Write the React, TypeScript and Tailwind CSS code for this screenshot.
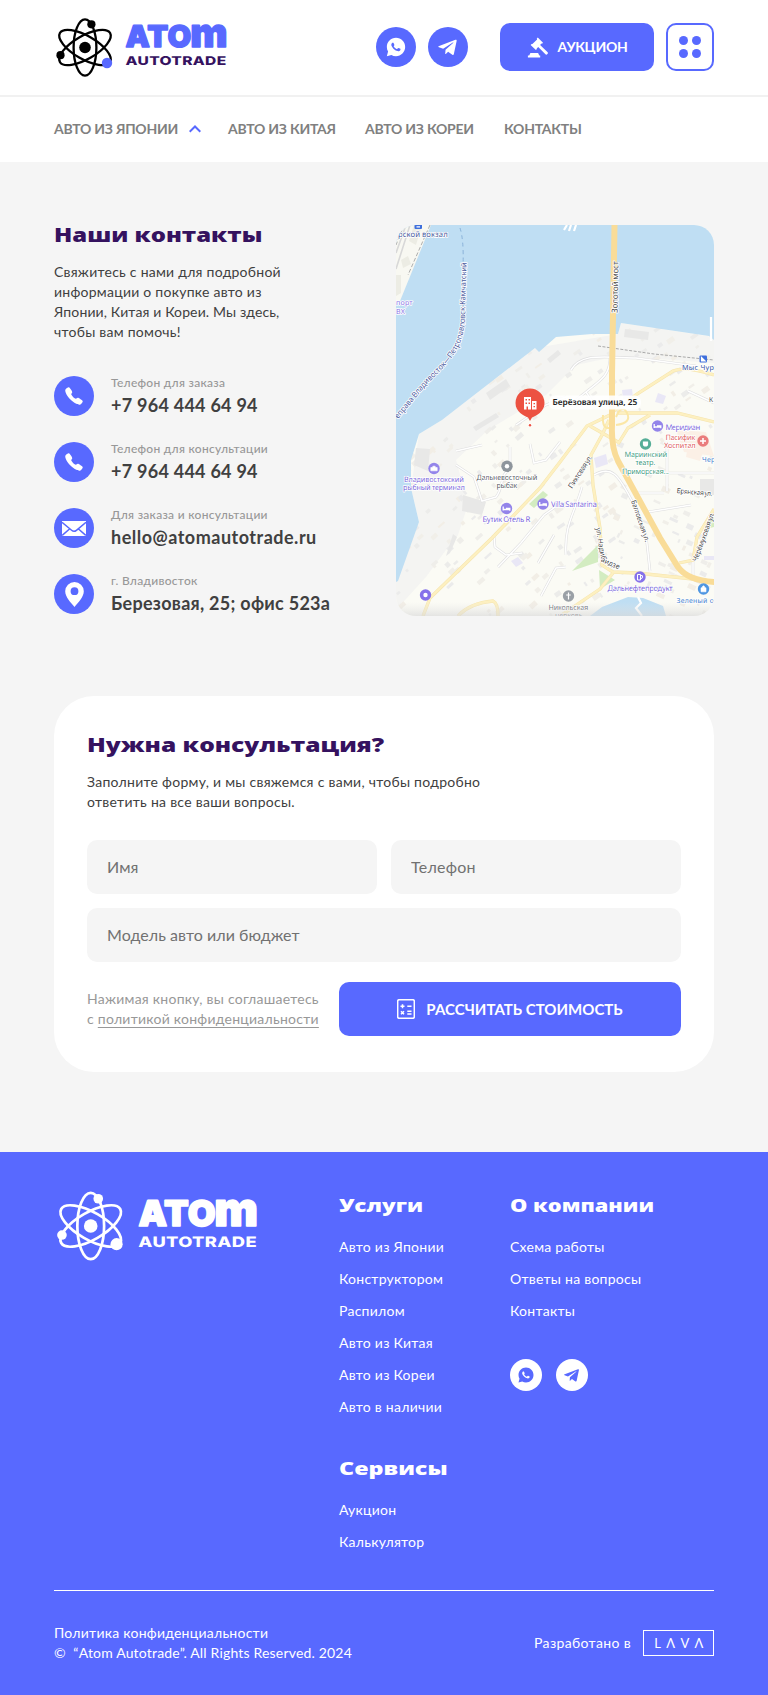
import type { ReactNode } from "react";
import { RiWhatsappFill } from "react-icons/ri";
import { FaTelegramPlane } from "react-icons/fa";
import { IoCall } from "react-icons/io5";

function Logo({ className, atom, accent, name, sub }: { className: string; atom: string; accent: string; name: string; sub: string }) {
  return (
    <svg className={className} viewBox="54 16 174 63" role="img" aria-label="Atom Autotrade">
      <g fill="none" stroke={atom} strokeWidth="2.3">
        <ellipse cx="85" cy="47.5" rx="11.4" ry="28.2" />
        <ellipse cx="85" cy="47.5" rx="11.6" ry="29" transform="rotate(60 85 47.5)" />
        <ellipse cx="85" cy="47.5" rx="11.6" ry="29" transform="rotate(-60 85 47.5)" />
      </g>
      <circle cx="85" cy="47.5" r="5.8" fill={atom} />
      <circle cx="91.4" cy="24.3" r="4.1" fill={atom} />
      <circle cx="60.5" cy="55.2" r="4.1" fill={atom} />
      <circle cx="107" cy="63" r="5.2" fill={accent} />
      <g fill={name} stroke={name} strokeWidth="1.4" strokeLinejoin="round" textRendering="geometricPrecision" className="font-['Inter'] font-black">
        <text x="125.6" y="47.3" fontSize="30" textLength="66" lengthAdjust="spacingAndGlyphs">ATO</text>
        <text x="190.2" y="47.3" fontSize="40" textLength="37.500" lengthAdjust="spacingAndGlyphs">m</text>
      </g>
      <text x="125.5" y="65" fontSize="12.2" textLength="101" lengthAdjust="spacingAndGlyphs" textRendering="geometricPrecision" fill={sub} className="font-['Inter'] font-extrabold">AUTOTRADE</text>
    </svg>
  );
}

function Heading({ children, className }: { children: ReactNode; className: string }) {
  return <h2 className={`origin-left whitespace-nowrap font-['Open_Sans'] font-extrabold leading-5 ${className}`}>{children}</h2>;
}

const GavelIcon = () => (
  <svg className="size-[21px]" viewBox="0 0 21 21" fill="currentColor">
    <path d="M10.800.6l5.200 5.200-1 1-.6-.2-1.300 1.300 7.300 7a1.500 1.500 0 0 1-2.200 2.200l-7-7.200-1.500 1.500.2.700-1 1L3.600 7.900l1-1 .8.2 4.700-4.700-.3-.8zM3.400 16h7.700l1.200 2.600h.9V20.500H.9V18.600h1.300z" />
  </svg>
);

const MailIcon = () => (
  <svg className="h-[15px] w-6" viewBox="0 0 24 15">
    <rect width="24" height="15" fill="#fff" />
    <path d="M0 1.2 9.6 9.3Q12 11.3 14.4 9.3L24 1.2M.2 14.4l7.6-6.6M23.8 14.4l-7.6-6.6" fill="none" stroke="#5869ff" strokeWidth="1.5" />
  </svg>
);

const PinIcon = () => (
  <svg className="h-[25px] w-[19px]" viewBox="0 0 19 25">
    <path fillRule="evenodd" fill="#fff" d="M9.5 0A9.3 9.3 0 0 0 .2 9.3C.2 15 6 21 9.5 25 13 21 18.800 15 18.800 9.300A9.300 9.300 0 0 0 9.500 0Zm0 5.300a3.900 3.900 0 1 1 0 7.800 3.900 3.900 0 0 1 0-7.800Z" />
  </svg>
);

const CalcIcon = () => (
  <svg className="h-5 w-[18px]" viewBox="0 0 18 20" fill="none" stroke="#fff" strokeWidth="1.5">
    <rect x=".7" y=".7" width="16.600" height="18.600" rx="1.500" />
    <path d="M3.500 7.200h4M5.500 5.200v4M10.300 7.200h4.200M10.300 12.300h4.200M10.300 15h4.200M4 12.200l3 3M7 12.200l-3 3" />
  </svg>
);

const contacts = [
  { label: "Телефон для заказа", value: "+7 964 444 64 94", icon: <IoCall className="size-[20px]" />, tracking: "tracking-[0.25px]" },
  { label: "Телефон для консультации", value: "+7 964 444 64 94", icon: <IoCall className="size-[20px]" />, tracking: "tracking-[0.25px]" },
  { label: "Для заказа и консультации", value: "hello@atomautotrade.ru", icon: <MailIcon />, tracking: "tracking-[0.5px]" },
  { label: "г. Владивосток", value: "Березовая, 25; офис 523а", icon: <PinIcon />, tracking: "tracking-[0.27px]" },
];

let seed = 7;
const rnd = () => (seed = (seed * 16807) % 2147483647) / 2147483647;
const blocks = Array.from({ length: 330 }, () => {
  const x = rnd() * 318, y = 105 + rnd() * 286, w = 2 + rnd() * 7, h = 2 + rnd() * 3.5, a = x < 150 && y > 200 ? -42 : x > 215 && y > 215 ? 25 : -35;
  return { x, y, w, h, a, c: ["#ececea", "#efeeea", "#f1efe9", "#ebebeb", "#f2eee6"][Math.floor(rnd() * 5)] };
});

const smallRoads = [
  "M175 145C185 128 205 132 240 133L300 141", "M214 133C214 150 205 155 190 167L176 178", "M190 167L200 182",
  "M60 226L86 220M60 240L78 252 86 276 100 272C108 262 104 250 112 246", "M114 222V245M134 219L138 238 150 235 164 217",
  "M98 312L99 322 110 330 126 328M102 342L125 318 148 290 162 280", "M142 338L158 310M145 371L160 343 170 342",
  "M198 250C215 240 222 248 238 280L250 310 254 346", "M252 287L295 280M271 266V220M240 268H268M273 248H318M297 353V335",
  "M170 330C168 300 178 290 186 262", "M292 166L318 178", "M120 200L150 180 170 172",
];
const yellowRoads = [
  "M27 391L34 373 96 313 144 263 164 237 191 201 214 190", "M62 391Q74 378 97 376 102 378 102 391",
  "M218 186L241 169 277 146Q290 141 318 150", "M213 195L206 210 195 230 197 260 204 303 206 340 217 347 241 348 297 354",
  "M164 391L204 364 217 348", "M221 188H281L318 197M194 201L222 217M222 219L232 203 254 190M283 338L297 335 301 312 318 284",
];

const halo = { paintOrder: "stroke" as const, stroke: "#fff", strokeWidth: 1.6, strokeLinejoin: "round" as const };

function Poi({ x, y, color, kind }: { x: number; y: number; color: string; kind: string }) {
  return (
    <g transform={`translate(${x} ${y})`}>
      <circle r="5.700" fill={color} />
      {kind === "dot" && <circle r="2.200" fill="#fff" />}
      {kind === "bed" && <path d="M-3.300-2v4M-3.300 1H3.300v1.200M-.5 0h3.800v1" stroke="#fff" strokeWidth="1.300" fill="none" />}
      {kind === "case" && <path d="M-3.200-1h6.400v3.300h-6.400zM-1.200-1v-1.300h2.400V-1" fill="#fff" stroke="#fff" strokeWidth=".6" />}
      {kind === "plus" && <path d="M0-3v6M-3 0h6" stroke="#fff" strokeWidth="1.500" />}
      {kind === "cross" && <path d="M0-3.500v7M-2.300-1h4.600" stroke="#fff" strokeWidth="1.200" />}
      {kind === "mask" && <path d="M-2.600-2.500h5.200V0A2.600 2.600 0 0 1-2.600 0z" fill="#fff" />}
      {kind === "fuel" && <path d="M-2.500 3v-5.500h3V3zM1-1.500Q3-2 2.500 0T1 1.500" fill="none" stroke="#fff" strokeWidth="1" />}
      {kind === "bag" && <path d="M-2.500-1.200h5v4h-5zM-1.200-1.200q0-2 1.200-2t1.200 2" fill="#fff" stroke="#fff" strokeWidth=".6" />}
    </g>
  );
}

function ContactMap() {
  return (
    <svg className="h-[391px] w-[318px] shrink-0 rounded-[20px] bg-[#fbfbf5] font-['Noto_Sans']" viewBox="0 0 318 391" textRendering="geometricPrecision">
      <defs>
        <path id="ferry" d="M2 194L32 158Q58 134 64 118T69 84L71 30" />
        <path id="nadibaidze" d="M200 303Q203 326 206 337L226 346" />
        <linearGradient id="shade" x1="0" y1="0" x2="0" y2="1">
          <stop offset="0" stopColor="#e5e5e5" stopOpacity="0" />
          <stop offset="1" stopColor="#d8d8d8" stopOpacity=".65" />
        </linearGradient>
      </defs>
      <path d="M46 195L139 123 222 109 225 98 318 112V138L222 131 180 140 150 170 92 205 60 235 72 280 62 310 50 325 30 352 0 385V356L23 297 15 263 23 209Z" fill="#f4f4f2" />
      {blocks.map((b, i) => (
        <rect key={i} x={b.x} y={b.y} width={b.w} height={b.h} fill={b.c} transform={`rotate(${b.a} ${b.x} ${b.y})`} />
      ))}
      <g fill="#e8e8e7">
        <path d="M90 168L110 154 114 161 94 175ZM20 223L34 224 32 246 18 240ZM50 331L57 309 61 312 54 328ZM67 270L90 277 86 290 66 286ZM229 104L253 107 252 115 228 112ZM77 202L100 188 103 192 80 206Z" />
        <path d="M304 254h14v16h-14zM151 134L162 125 165 129 154 138Z" />
      </g>
      <path d="M202 320L176 346 202 337ZM203 345L219 355 204 364ZM309 296l9-4v10l-9 2zM133 279l14-13 5 4-14 13z" fill="#d3ecc1" />
      <path d="M226 165l10-1 1 9-10 1zM262 168l8 3-3 8-8-2zM198 233l12-4 2 10-12 4zM115 336l7-4 5 6-7 4zM308 331h10v4h-10z" fill="#e9e7f6" />
      <path d="M280 205l30 2 8 24-30-4zM292 220l16 4-4 12-14-4z" fill="#fbf0e6" />
      <g fill="none" stroke="#dededf" strokeWidth="2.600">{smallRoads.map(d => <path key={d} d={d} />)}</g>
      <g fill="none" stroke="#fff" strokeWidth="1.500">{smallRoads.map(d => <path key={d} d={d} />)}</g>
      <path fill="#bfdef3" d="M0 0H318V115L313 111 225 98 222 109 196 109 160 112 143 127 139 123 46 195 23 209 15 235 15 263 23 297 2 356 0 357Z" />
      <path fill="#bfdef3" d="M194 391L206 382 232 372 247 373 267 381 270 391Z" />
      <path d="M315 92V116M171 0L168 5M175 0L173 6M180 0L178 6M242 372L245 378 240 383 246 391" stroke="#fff" strokeWidth="2.200" fill="none" />
      <path d="M0 0H35L4 76 0 78Z" fill="#f8f8f2" />
      <path d="M18 0L26 0 20 20 13 16ZM5 35l7-4 3 8-8 4ZM0 50l5 0 0 18-5 3Z" fill="#ececE4" />
      <path d="M10 0L0 28M14 0L0 44" stroke="#d8d8d8" strokeWidth="1.600" />
      <path d="M34 0L12 50M8 0L0 20" stroke="#9a9a9a" strokeWidth=".8" strokeDasharray="4 2" />
      <path d="M64 3Q68 15 67 42" stroke="#84aed6" strokeWidth=".9" strokeDasharray="4 3.500" fill="none" />
      <path d="M202 121L258 129 318 135" stroke="#aaa" strokeWidth="1" strokeDasharray="3 1.500" fill="none" />
      <g fill="none" stroke="#f5e4ae" strokeWidth="3.300">{yellowRoads.map(d => <path key={d} d={d} />)}</g>
      <g fill="none" stroke="#fdf0c0" strokeWidth="2.300">{yellowRoads.map(d => <path key={d} d={d} />)}</g>
      <path d="M207 190Q206 204 213 203T216 195M220 200Q236 198 231 188T220 192" fill="none" stroke="#fbe7a6" strokeWidth="2" />
      <path d="M218.500 0L216 150V200Q215 222 222 236L264 313 282 342Q292 356 320 357" fill="none" stroke="#f9dc98" strokeWidth="6" />

      <g fontSize="7.800" fill="#4a5a9e" style={halo}>
        <text><textPath href="#ferry" textLength="180">еправа Владивосток—Петропавловск-Камчатский</textPath></text>
        <text x="2" y="12" textLength="50">рской вокзал</text>
        <text x="286" y="145" fontSize="7.200" fill="#3555a5">Мыс Чурк</text>
      </g>
      <g fontSize="8" fill="#8a72e6" style={halo}>
        <text x="0" y="80" fontSize="7">порт</text><text x="0" y="88.500" fontSize="7">ВХ</text>
      </g>
      <g fontSize="7.800" fill="#7b68dc" style={halo}>
        <text x="8" y="257" fontSize="7.400" textLength="60">Владивостокский</text>
        <text x="7" y="265.300" fontSize="7.400" textLength="62">рыбный терминал</text>
        <text x="86.500" y="297" textLength="48">Бутик Отель R</text>
        <text x="155" y="282" textLength="46">Villa Santarina</text>
        <text x="269.500" y="204.500" textLength="35">Меридиан</text>
        <text x="211.500" y="366" textLength="65.500">Дальнефтепродукт</text>
      </g>
      <g fontSize="7.400" fill="#5d6168" style={halo}>
        <text x="80.500" y="255" textLength="61">Дальневосточный</text>
        <text x="100.500" y="263.300" textLength="21">рыбак</text>
        <text x="152.500" y="384.500" textLength="40">Никольская</text>
        <text x="159" y="392.500" textLength="28">церковь</text>
      </g>
      <g fontSize="7.500" fill="#3f9c82" style={halo}>
        <text x="228.500" y="232" textLength="43">Мариинский</text>
        <text x="239.500" y="240.300" textLength="20">театр.</text>
        <text x="226" y="248.600" textLength="47">Приморская...</text>
      </g>
      <g fontSize="7.500" fill="#e0605f" style={halo}>
        <text x="269.500" y="214.500" textLength="30">Пасифик</text>
        <text x="268" y="223" textLength="32">Хоспитал</text>
      </g>
      <g fontSize="7.200" fill="#3f7fd0" style={halo}>
        <text x="306" y="236.500" fontSize="7">Чер</text>
        <text x="280.500" y="377.500" fontSize="6.900">Зеленый ос</text>
      </g>
      <g fontSize="7.400" fill="#4b4b4b" style={halo}>
        <text transform="translate(221.500 88) rotate(-89)" fontSize="8.200" textLength="52">Золотой мост</text>
        <text transform="translate(176 264) rotate(-57)" textLength="38">Пихтовая ул.</text>
        <text transform="translate(235 276) rotate(71)" fontSize="7" textLength="44">Балтовская ул.</text>
        <text transform="translate(280.500 268) rotate(5)" fontSize="7" textLength="36">Брянская ул.</text>
        <text transform="translate(301 337) rotate(-70)" fontSize="7.200" textLength="52">Черёмуховая ул.</text>
        <text fontSize="7.200"><textPath href="#nadibaidze" textLength="53">ул. Надибаидзе</textPath></text>
        <text x="313" y="177" fontSize="6.500">К</text>
      </g>

      <Poi x={38} y={243.500} color="#9384ea" kind="case" />
      <Poi x={111} y={241.300} color="#8e959c" kind="dot" />
      <Poi x={110.500} y={283.500} color="#9384ea" kind="bed" />
      <Poi x={147} y={279} color="#9384ea" kind="bed" />
      <Poi x={29.500} y={370} color="#8672ea" kind="dot" />
      <Poi x={261.500} y={201} color="#9384ea" kind="bed" />
      <Poi x={249.500} y={219} color="#55ae97" kind="mask" />
      <Poi x={307} y={216} color="#ea7c7c" kind="plus" />
      <Poi x={244} y={352} color="#8672ea" kind="fuel" />
      <Poi x={172.500} y={371} color="#9aa0a6" kind="cross" />
      <Poi x={307.500} y={364} color="#4e96e2" kind="bag" />
      <g fill="#3e6fdc">
        <rect x="18.500" y="-3" width="7.500" height="7" rx="1" /><rect x="303.500" y="130.500" width="7.500" height="7" rx="1" />
      </g>
      <path d="M20.500 1.800h3.500M305.500 136v-3.500l3.500 3.500z" stroke="#fff" strokeWidth="1.200" fill="#fff" />

      <path d="M119.500 178a14.500 14.500 0 1 1 29 0C148.500 187 140 190.500 136 192.500L134 196 132 192.500C128 190.500 119.500 187 119.500 178Z" fill="#ec5242" />
      <circle cx="134" cy="200.300" r="2" fill="#fff" /><circle cx="134" cy="200.300" r="1.200" fill="#ec5242" />
      <path fillRule="evenodd" fill="#fff" d="M128 172h7v12.500h-7zM129.500 174v1.500h1.500V174zm3 0v1.500h1.500V174zm-3 3.500v1.500h1.500v-1.500zm3 0v1.500h1.500v-1.500zm-2 4v3h1.500v-3zM136 176h4.500v8.500H136zm1.500 2v1.300h1.500V178zm0 3v1.300h1.500V181z" />
      <rect x="153" y="170.500" width="92" height="14" rx="6" fill="#fff" fillOpacity=".9" />
      <text x="156.500" y="180.300" fontSize="8.300" textLength="85" className="font-semibold" fill="#1c1c1c">Берёзовая улица, 25</text>
      <rect y="377" width="318" height="14" fill="url(#shade)" />
    </svg>
  );
}

function FooterLinks({ items }: { items: string[] }) {
  return (
    <ul className="mt-[22px] flex flex-col gap-3 whitespace-nowrap">
      {items.map(i => <li key={i}><a href="#">{i}</a></li>)}
    </ul>
  );
}

export default function App() {
  return (
    <div className="w-[768px] bg-[#f5f5f5] font-['Lato',sans-serif] text-sm leading-5 tracking-[0.25px] text-[#404040]">
      <header className="bg-white">
        <div className="flex h-[95px] items-center px-[54px]">
          <Logo className="h-[63px] w-[174px]" atom="#000" accent="#5869ff" name="#5869ff" sub="#35125f" />
          <div className="mb-px ml-auto flex items-center text-white">
            <a href="#" className="flex size-10 items-center justify-center rounded-full bg-[#5869ff]"><RiWhatsappFill className="size-[22px]" /></a>
            <a href="#" className="ml-3 flex size-10 items-center justify-center rounded-full bg-[#5869ff]"><FaTelegramPlane className="mr-px size-[21px]" /></a>
            <button className="ml-8 flex h-12 w-[154px] items-center justify-center gap-2.5 rounded-[10px] bg-[#5869ff] text-sm font-bold tracking-[-0.3px]">
              <GavelIcon />АУКЦИОН
            </button>
            <button aria-label="Меню" className="ml-3 flex size-12 items-center justify-center rounded-[10px] border-2 border-[#5869ff]">
              <span className="grid grid-cols-2 gap-1">
                {[0, 1, 2, 3].map(i => <i key={i} className="size-[9px] rounded-full bg-[#5869ff]" />)}
              </span>
            </button>
          </div>
        </div>
        <nav className="flex h-[67px] items-center border-t-2 border-[#f1f1f1] px-[54px] pb-0.5 font-bold tracking-[-0.25px] text-[#808080]">
          <a href="#" className="w-[125px] whitespace-nowrap">АВТО ИЗ ЯПОНИИ</a>
          <svg className="ml-2.5 h-2 w-3" viewBox="0 0 12 8" fill="none" stroke="#5869ff" strokeWidth="2"><path d="M.7 6.700 6 1.500l5.300 5.200" /></svg>
          <a href="#" className="ml-[27px] w-[137px] whitespace-nowrap">АВТО ИЗ КИТАЯ</a>
          <a href="#" className="w-[139px] whitespace-nowrap">АВТО ИЗ КОРЕИ</a>
          <a href="#">КОНТАКТЫ</a>
        </nav>
      </header>

      <main className="px-[54px] pb-20 pt-[63px]">
        <section className="flex justify-between">
          <div>
            <Heading className="w-fit scale-x-[1.195] text-xl tracking-normal text-[#35125f]">Наши контакты</Heading>
            <p className="mt-[17px] whitespace-nowrap">Свяжитесь с нами для подробной<br />информации о покупке авто из<br /><span className="tracking-[0.12px]">Японии, Китая и Кореи. Мы здесь,</span><br />чтобы вам помочь!</p>
            <ul className="mt-[34px] flex flex-col gap-[26px]">
              {contacts.map(c => (
                <li key={c.label} className="flex h-10 gap-[17px]">
                  <span className="flex size-10 shrink-0 items-center justify-center rounded-full bg-[#5869ff] text-white">{c.icon}</span>
                  <div className="-mt-px flex flex-col gap-[3px] whitespace-nowrap">
                    <span className="text-xs font-medium tracking-[0.28px] text-[#989898]">{c.label}</span>
                    <span className={`text-lg/[22px] font-bold ${c.tracking}`}>{c.value}</span>
                  </div>
                </li>
              ))}
            </ul>
          </div>
          <ContactMap />
        </section>

        <section className="mt-20 h-[376px] rounded-[40px] bg-white px-[33px] pt-[39px]">
          <Heading className="w-fit scale-x-[1.227] text-xl tracking-normal text-[#35125f]">Нужна консультация?</Heading>
          <p className="mt-[17px] tracking-[0.27px]">Заполните форму, и мы свяжемся с вами, чтобы подробно<br />ответить на все ваши вопросы.</p>
          <form className="mt-7 grid grid-cols-2 gap-3.5 text-base">
            <input placeholder="Имя" className="h-[54px] min-w-0 rounded-[10px] bg-[#f5f5f5] px-5 pb-0.5 tracking-[0.05px] placeholder:text-[#717171]" />
            <input placeholder="Телефон" className="h-[54px] min-w-0 rounded-[10px] bg-[#f5f5f5] px-5 pb-0.5 tracking-[0.25px] placeholder:text-[#717171]" />
            <input placeholder="Модель авто или бюджет" className="col-span-2 h-[54px] rounded-[10px] bg-[#f5f5f5] px-5 pb-0.5 tracking-[0.05px] placeholder:text-[#717171]" />
          </form>
          <div className="mt-5 flex items-center justify-between">
            <p className="whitespace-nowrap text-[#989898]">Нажимая кнопку, вы соглашаетесь<br />с <a href="#" className="underline decoration-1 underline-offset-[3px]">политикой конфиденциальности</a></p>
            <button className="flex h-[54px] w-[342px] items-center justify-center gap-[11px] rounded-[10px] bg-[#5869ff] text-[15px] font-bold tracking-[0.02px] text-white">
              <CalcIcon />РАССЧИТАТЬ СТОИМОСТЬ
            </button>
          </div>
        </section>
      </main>

      <footer className="h-[543px] bg-[#5869ff] px-[54px] pt-[37px] text-white">
        <div className="flex h-[402px] border-b border-white">
          <div className="w-[285px]"><Logo className="h-[74px] w-[205px]" atom="#fff" accent="#fff" name="#fff" sub="#fff" /></div>
          <div className="w-[171px] pt-1.5">
            <Heading className="w-fit scale-x-[1.25] text-lg/5 tracking-normal">Услуги</Heading>
            <FooterLinks items={["Авто из Японии", "Конструктором", "Распилом", "Авто из Китая", "Авто из Кореи", "Авто в наличии"]} />
            <Heading className="mt-[41px] w-fit scale-x-[1.295] text-lg/5 tracking-normal">Сервисы</Heading>
            <FooterLinks items={["Аукцион", "Калькулятор"]} />
          </div>
          <div className="pt-1.5">
            <Heading className="w-fit scale-x-[1.212] text-lg/5 tracking-normal">О компании</Heading>
            <FooterLinks items={["Схема работы", "Ответы на вопросы", "Контакты"]} />
            <div className="mt-[38px] flex gap-3.5 text-[#5869ff]">
              <a href="#" className="flex size-8 items-center justify-center rounded-full bg-white"><RiWhatsappFill className="size-[18px]" /></a>
              <a href="#" className="flex size-8 items-center justify-center rounded-full bg-white"><FaTelegramPlane className="mr-px size-[17px]" /></a>
            </div>
          </div>
        </div>
        <div className="mt-8 flex items-center justify-between">
          <p>Политика конфиденциальности<br /><span className="whitespace-pre tracking-[0.18px]">©  “Atom Autotrade”. All Rights Reserved. 2024</span></p>
          <div className="flex items-center gap-3">
            <span className="tracking-[0.35px]">Разработано в</span>
            <span className="flex h-[26px] w-[71px] items-center justify-center border border-white pl-1.5 font-['Lato'] text-[13px] tracking-[5.3px]">LΛVΛ</span>
          </div>
        </div>
      </footer>
    </div>
  );
}
